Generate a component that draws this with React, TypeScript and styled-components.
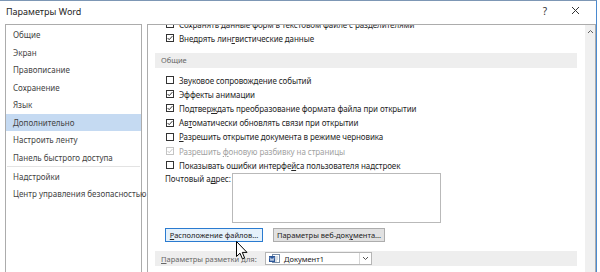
import styled, { createGlobalStyle } from "styled-components";

const GlobalStyle = createGlobalStyle`
  html, body {
    margin: 0;
    padding: 0;
    background: #ffffff;
  }
  body {
    width: 600px;
    height: 272px;
    overflow: hidden;
    font-family: "Noto Sans", "Open Sans", sans-serif;
    color: #262626;
  }
  u {
    text-underline-offset: 1px;
  }
`;

const Window = styled.div`
  position: relative;
  width: 597px;
  height: 272px;
  border-top: 1px solid #7d97b5;
  border-right: 1px solid #4a8ad0;
  box-sizing: border-box;
  display: flex;
  flex-direction: column;
  background: #ffffff;
  overflow: hidden;
`;

const TitleBar = styled.div`
  height: 23px;
  display: flex;
  align-items: center;
  padding: 0 6px;
  flex-shrink: 0;
`;

const Caption = styled.div`
  flex: 1;
  font-size: 9px;
  color: #1e1e1e;
  margin-top: -3px;
`;

const TitleButton = styled.div`
  width: 30px;
  text-align: center;
  font-size: 10px;
  color: #333;
  margin-top: -3px;
`;

const Body = styled.div`
  flex: 1;
  display: flex;
  gap: 5px;
  padding-left: 5px;
  min-height: 0;
`;

const NavPanel = styled.div`
  width: 137px;
  border: 1px solid #acacac;
  border-bottom: none;
  box-sizing: border-box;
  padding-top: 1px;
  display: flex;
  flex-direction: column;
`;

const NavItem = styled.div<{ $active?: boolean }>`
  height: 17.5px;
  display: flex;
  align-items: center;
  padding-left: 7px;
  font-size: 8px;
  color: #444;
  white-space: nowrap;
  background: ${(p) => (p.$active ? "#c5daf2" : "transparent")};
`;

const NavSeparator = styled.div`
  height: 1px;
  background: #e3e3e3;
  margin: 0 1px 0.5px;
`;

const MainPanel = styled.div`
  flex: 1;
  border: 1px solid #acacac;
  border-bottom: none;
  box-sizing: border-box;
  display: flex;
  overflow: hidden;
`;

const Content = styled.div`
  flex: 1;
  display: flex;
  flex-direction: column;
  margin-top: -8px;
  padding: 0 8px 0 7px;
  min-width: 0;
`;

const Row = styled.div<{ $disabled?: boolean }>`
  height: 14.2px;
  display: flex;
  align-items: center;
  padding-left: 11px;
  gap: 5px;
  font-size: 8px;
  letter-spacing: -0.08px;
  white-space: nowrap;
  color: ${(p) => (p.$disabled ? "#a3a3a3" : "#262626")};
`;

const Box = styled.div<{ $disabled?: boolean }>`
  width: 8px;
  height: 8px;
  box-sizing: border-box;
  border: 1px solid ${(p) => (p.$disabled ? "#c4c4c4" : "#333333")};
  background: #ffffff;
  flex-shrink: 0;
  display: flex;
  align-items: center;
  justify-content: center;
`;

const SectionBand = styled.div<{ $top?: number }>`
  height: 15px;
  margin-top: ${(p) => p.$top ?? 0}px;
  background: #eeeeee;
  display: flex;
  align-items: center;
  padding-left: 6px;
  font-size: 7.5px;
  color: #666;
  flex-shrink: 0;
`;

const BandLabel = styled.span`
  width: 104px;
  white-space: nowrap;
`;

const FieldRow = styled.div`
  display: flex;
  align-items: flex-start;
  margin-top: 1px;
  padding-left: 10px;
`;

const FieldLabel = styled.div`
  width: 67px;
  font-size: 8px;
  padding-top: 1px;
  line-height: 10px;
`;

const TextBox = styled.div`
  width: 209px;
  height: 50px;
  box-sizing: border-box;
  border: 1px solid #b9b9b9;
  background: #fff;
`;

const ButtonRow = styled.div`
  display: flex;
  gap: 10px;
  margin-top: 5px;
  padding-left: 10px;
`;

const Button = styled.div<{ $focused?: boolean; $w: number }>`
  width: ${(p) => p.$w}px;
  height: 14px;
  box-sizing: border-box;
  border: 1px solid ${(p) => (p.$focused ? "#2a7bd0" : "#adadad")};
  background: ${(p) => (p.$focused ? "#e5f1fb" : "#e1e1e1")};
  font-size: 7.5px;
  display: flex;
  align-items: center;
  justify-content: center;
  white-space: nowrap;
  color: #222;
`;

const Select = styled.div`
  width: 107px;
  height: 13px;
  box-sizing: border-box;
  border: 1px solid #b5b5b5;
  background: #fff;
  display: flex;
  align-items: center;
  font-size: 7.5px;
  color: #222;
`;

const SelectValue = styled.div`
  flex: 1;
  display: flex;
  align-items: center;
  gap: 4px;
  padding-left: 3px;
`;

const SelectArrow = styled.div`
  width: 11px;
  height: 100%;
  border-left: 1px solid #d6d6d6;
  display: flex;
  align-items: center;
  justify-content: center;
`;

const Scrollbar = styled.div`
  width: 10px;
  background: #f0f0f0;
  display: flex;
  justify-content: center;
  padding-top: 4px;
  flex-shrink: 0;
`;

const Cursor = styled.svg`
  position: absolute;
  left: 236px;
  top: 240px;
`;

const Check = ({ disabled }: { disabled?: boolean }) => (
  <svg width="6" height="6" viewBox="0 0 6 6">
    <polyline
      points="0.6,3 2.2,4.7 5.4,1.1"
      fill="none"
      stroke={disabled ? "#c4c4c4" : "#333"}
      strokeWidth="1"
    />
  </svg>
);

const DocIcon = () => (
  <svg width="11" height="9" viewBox="0 0 11 9">
    <rect x="3.5" y="0.5" width="7" height="8" fill="#fff" stroke="#7a8fa8" />
    <path d="M5 3 H9 M5 5 H9 M5 7 H8" stroke="#9ab" strokeWidth="0.8" />
    <rect x="0" y="2" width="6" height="6" fill="#2b579a" />
    <path d="M1 3.5 L2 6.8 L3 4.5 L4 6.8 L5 3.5" fill="none" stroke="#fff" strokeWidth="0.7" />
  </svg>
);

const Option = ({
  checked,
  disabled,
  children,
}: {
  checked?: boolean;
  disabled?: boolean;
  children: React.ReactNode;
}) => (
  <Row $disabled={disabled}>
    <Box $disabled={disabled}>{checked && <Check disabled={disabled} />}</Box>
    <span>{children}</span>
  </Row>
);

const navItems = [
  "Общие",
  "Экран",
  "Правописание",
  "Сохранение",
  "Язык",
  "Дополнительно",
  "Настроить ленту",
  "Панель быстрого доступа",
];

export default function App() {
  return (
    <>
      <GlobalStyle />
      <Window>
        <TitleBar>
          <Caption>Параметры Word</Caption>
          <TitleButton>?</TitleButton>
          <TitleButton>
            <svg width="9" height="9" viewBox="0 0 9 9">
              <path d="M1 1 L8 8 M8 1 L1 8" stroke="#333" strokeWidth="1" />
            </svg>
          </TitleButton>
        </TitleBar>
        <Body>
          <NavPanel>
            {navItems.map((n) => (
              <NavItem key={n} $active={n === "Дополнительно"}>
                {n}
              </NavItem>
            ))}
            <NavSeparator />
            <NavItem>Надстройки</NavItem>
            <NavItem>Центр управления безопасностью</NavItem>
          </NavPanel>
          <MainPanel>
            <Content>
              <Option>Сохранять данные форм в текстовом файле с разделителями</Option>
              <Option checked>
                Внедрять лин<u>г</u>вистические данные
              </Option>
              <SectionBand $top={7.6}>Общие</SectionBand>
              <div style={{ height: 5 }} />
              <Option>
                Звуковое сопровож<u>д</u>ение событий
              </Option>
              <Option checked>Эффекты анимации</Option>
              <Option checked>
                Подтвер<u>ж</u>дать преобразование формата файла при открытии
              </Option>
              <Option checked>
                Ав<u>т</u>оматически обновлять связи при открытии
              </Option>
              <Option>
                <u>Р</u>азрешить открытие документа в режиме черновика
              </Option>
              <Option checked disabled>
                Разрешить <u>ф</u>оновую разбивку на страницы
              </Option>
              <Option>
                Показывать ошибки интерфе<u>й</u>са пользователя надстроек
              </Option>
              <FieldRow>
                <FieldLabel>
                  Почтовый а<u>д</u>рес:
                </FieldLabel>
                <TextBox />
              </FieldRow>
              <ButtonRow>
                <Button $focused $w={98}>
                  <span>
                    <u>Р</u>асположение файлов...
                  </span>
                </Button>
                <Button $w={112}>
                  <span>
                    Параметры веб-док<u>у</u>мента...
                  </span>
                </Button>
              </ButtonRow>
              <SectionBand $top={9}>
                <BandLabel>
                  <u>П</u>араметры разметки для:
                </BandLabel>
                <Select>
                  <SelectValue>
                    <DocIcon />
                    <span>Документ1</span>
                  </SelectValue>
                  <SelectArrow>
                    <svg width="7" height="5" viewBox="0 0 7 5">
                      <polyline points="1,1 3.5,3.5 6,1" fill="none" stroke="#555" strokeWidth="1" />
                    </svg>
                  </SelectArrow>
                </Select>
              </SectionBand>
            </Content>
            <Scrollbar>
              <svg width="7" height="5" viewBox="0 0 7 5">
                <polyline points="1,4 3.5,1.5 6,4" fill="none" stroke="#606060" strokeWidth="1" />
              </svg>
            </Scrollbar>
          </MainPanel>
        </Body>
        <Cursor width="13" height="19" viewBox="0 0 13 19">
          <path
            d="M0.5 0.5 L0.5 15.5 L4 12.2 L6.4 17.8 L8.6 16.9 L6.3 11.4 L11 11.4 Z"
            fill="#ffffff"
            stroke="#000000"
            strokeWidth="1"
            strokeLinejoin="round"
          />
        </Cursor>
      </Window>
    </>
  );
}
